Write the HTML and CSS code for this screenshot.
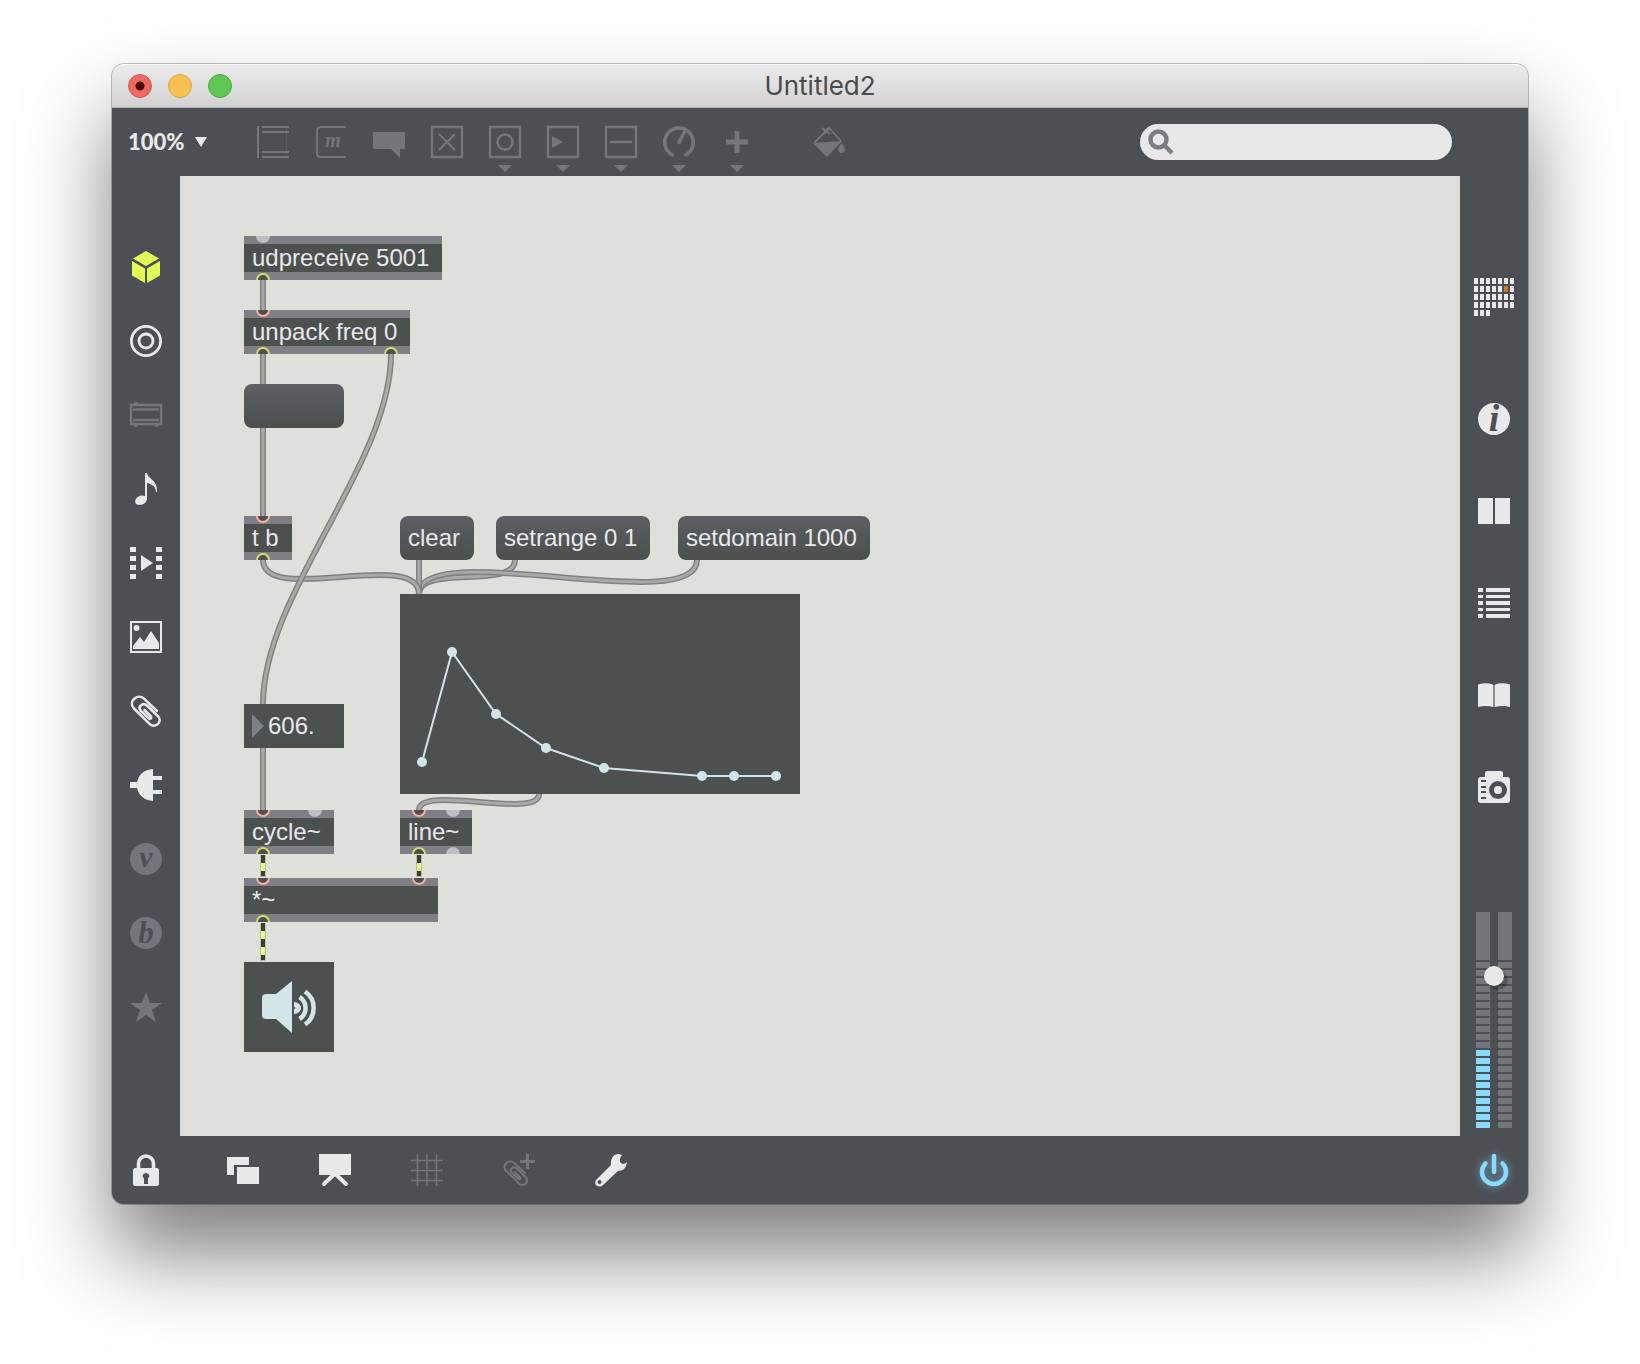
FILE: index.html
```html
<!DOCTYPE html>
<html lang="en">
<head>
<meta charset="utf-8">
<title>Untitled2</title>
<link rel="stylesheet" href="styles.css">
</head>
<body>
<svg class="defs" aria-hidden="true">
  <symbol id="clip" viewBox="0 0 32 32">
    <path fill="none" stroke="currentColor" stroke-width="2.500" stroke-linecap="round" stroke-linejoin="round" d="M27 16L14 3.600C7.500-2-2 6.500 3.500 13L19.500 28.800C25 34 33 27 28.300 21.500L17 10.500C13 7 7.500 11.500 10.500 15.500L19 23.500C20.500 24.500 22 23 21 21.500L14.500 15"/>
  </symbol>
  <symbol id="down" viewBox="0 0 14 7"><path fill="currentColor" d="M0 0h14L7 7z"/></symbol>
</svg>

<main class="window">
  <header class="titlebar">
    <div class="lights">
      <button class="light close" aria-label="Close"></button>
      <button class="light minimize" aria-label="Minimize"></button>
      <button class="light expand" aria-label="Zoom window"></button>
    </div>
    <h1 class="title">Untitled2</h1>
  </header>

  <div class="toolbar">
    <div class="zoom">
      <select class="zoom-select" aria-label="Zoom level"><option>100%</option></select>
      <svg class="zoom-arrow" viewBox="0 0 12 10"><path fill="currentColor" d="M0 0h12L6 10z"/></svg>
    </div>
    <div class="tools">
      <button class="icon-button" aria-label="Object"><svg class="icon" viewBox="0 0 32 32"><path fill="currentColor" d="M0 0h2v32H0zM5 0h27v2H5zM5 5h27v2H5zM5 25h27v2H5zM5 30h27v2H5z"/><path stroke="currentColor" opacity=".3" d="M29.500 2v28"/></svg></button>
      <button class="icon-button" aria-label="Message"><svg class="icon" viewBox="0 0 32 32"><path fill="none" stroke="currentColor" stroke-width="2" d="M31 1H6Q2 1 2 5v22q0 4 4 4h25"/><text class="glyph" x="18" y="21" font-size="20">m</text></svg></button>
      <button class="icon-button" aria-label="Comment"><svg class="icon" viewBox="0 0 32 32"><path fill="currentColor" d="M0 6h32v17h-5v9l-9-9H0z"/></svg></button>
      <button class="icon-button" aria-label="Toggle"><svg class="icon" viewBox="0 0 32 32"><path fill="none" stroke="currentColor" stroke-width="2.400" d="M1 1h30v30H1zM8 8l16 16M24 8L8 24"/></svg></button>
      <button class="icon-button" aria-label="Button"><svg class="icon" viewBox="0 0 32 32"><path fill="none" stroke="currentColor" stroke-width="2.400" d="M1 1h30v30H1z"/><circle cx="16" cy="16" r="7.500" fill="none" stroke="currentColor" stroke-width="2.400"/></svg><svg class="more"><use href="#down"/></svg></button>
      <button class="icon-button" aria-label="Number"><svg class="icon" viewBox="0 0 32 32"><path fill="none" stroke="currentColor" stroke-width="2.400" d="M1 1h30v30H1z"/><path fill="currentColor" d="M5 10l11 6-11 6z"/></svg><svg class="more"><use href="#down"/></svg></button>
      <button class="icon-button" aria-label="Slider"><svg class="icon" viewBox="0 0 32 32"><path fill="none" stroke="currentColor" stroke-width="2.400" d="M1 1h30v30H1zM5 16h22"/></svg><svg class="more"><use href="#down"/></svg></button>
      <button class="icon-button" aria-label="Dial"><svg class="icon" viewBox="0 0 32 32"><path fill="none" stroke="currentColor" stroke-width="3.600" stroke-linecap="round" d="M9.500 29A14.300 14.300 0 1 1 22.500 29M16 16.500L22 5"/></svg><svg class="more"><use href="#down"/></svg></button>
      <button class="icon-button" aria-label="Add"><svg class="icon" viewBox="0 0 32 32"><path fill="currentColor" d="M13.500 5h5v8.500H27v5h-8.500V27h-5v-8.500H5v-5h8.500z"/></svg><svg class="more"><use href="#down"/></svg></button>
      <button class="icon-button paint" aria-label="Format"><svg class="icon" viewBox="0 0 32 32"><path fill="none" stroke="currentColor" stroke-width="1.800" d="M1 17L16 2l12 13M9 2l8 6M15 2L11 8"/><path fill="currentColor" d="M0 17l29-2L14 31zM28.500 17q4.500 6 3 8.500q-3 3-6 0q-1.500-3 3-8.500"/></svg></button>
    </div>
    <label class="search">
      <svg class="search-icon" viewBox="0 0 26 26"><circle cx="10.500" cy="10.500" r="8" fill="none" stroke="currentColor" stroke-width="4.500"/><path stroke="currentColor" stroke-width="4.500" d="M16 16l8 8"/></svg>
      <input class="search-input" type="search" aria-label="Search">
    </label>
  </div>

  <div class="workspace">
    <nav class="rail left" aria-label="Object palette">
      <button class="icon-button active" aria-label="Objects"><svg class="icon" viewBox="0 0 32 32"><path fill="currentColor" d="M16 0l13 7.500-13 7.500L3 7.500zM2 10l13 7.500V32L2 24.500zM30 10v14.500L17 32V17.500z"/></svg></button>
      <button class="icon-button" aria-label="Controls"><svg class="icon" viewBox="0 0 32 32"><g fill="none" stroke="currentColor" stroke-width="2.800"><circle cx="16" cy="16" r="14.600"/><circle cx="16" cy="16" r="7"/></g></svg></button>
      <button class="icon-button dim" aria-label="Devices"><svg class="icon" viewBox="0 0 32 32"><path fill="none" stroke="currentColor" stroke-width="2.400" d="M1 6h30v19H1zM3 10.500h26M3 21h26"/><path fill="currentColor" d="M3 5q3-4 6 0zM3 26h5q-2 4-5 0zM24 26h5q-3 4-5 0z"/></svg></button>
      <button class="icon-button" aria-label="Audio"><svg class="icon" viewBox="0 0 32 32"><path fill="currentColor" d="M15 0h2c0 5 11 7 10 19h-1c0-5-4-8-9-9v15c0 6-6 8-10 6.500c-4-2-1-9 5-9q2 0 3 .5z"/></svg></button>
      <button class="icon-button" aria-label="Video"><svg class="icon" viewBox="0 0 32 32"><path fill="currentColor" d="M0 0h6v5H0zM0 9h6v5H0zM0 18h6v5H0zM0 27h6v5H0zM26 0h6v5h-6zM26 9h6v5h-6zM26 18h6v5h-6zM26 27h6v5h-6zM11 8l12 8-12 8z"/></svg></button>
      <button class="icon-button" aria-label="Images"><svg class="icon" viewBox="0 0 32 32"><path fill="none" stroke="currentColor" stroke-width="2" d="M1 1h30v30H1z"/><circle cx="6.500" cy="7" r="3" fill="currentColor"/><path fill="currentColor" d="M3 28v-3l7-9 4 5 7-11 8 12v6z"/></svg></button>
      <button class="icon-button" aria-label="Clippings"><svg class="icon"><use href="#clip"/></svg></button>
      <button class="icon-button" aria-label="Plug-ins"><svg class="icon" viewBox="0 0 32 32"><path fill="currentColor" d="M23 0v7h9v4h-9v10h9v4h-9v7Q10 31 7 19H0v-6h7Q10 1 23 0z"/></svg></button>
      <button class="icon-button dim" aria-label="Vizzie"><svg class="icon" viewBox="0 0 32 32"><circle cx="16" cy="16" r="16" fill="currentColor"/><text class="glyph cut" x="16" y="24" font-size="30">v</text></svg></button>
      <button class="icon-button dim" aria-label="Beap"><svg class="icon" viewBox="0 0 32 32"><circle cx="16" cy="16" r="16" fill="currentColor"/><text class="glyph cut" x="16" y="26" font-size="31">b</text></svg></button>
      <button class="icon-button dim" aria-label="Favorites"><svg class="icon" viewBox="0 0 32 32"><path fill="currentColor" d="M16 1l4 11h12l-10 7 4 12-10-7-10 7 4-12-10-7h12z"/></svg></button>
    </nav>

    <section class="canvas" aria-label="Patcher">
      <svg class="cords" aria-hidden="true">
        <defs>
          <path id="c1" d="M83 104V134"/><path id="c2" d="M83 178V340"/>
          <path id="c3" d="M211 178C211 288 83 418 83 528"/>
          <path id="c4" d="M335 384C335 414 239 388 239 418"/>
          <path id="c5" d="M517 384C517 442 239 360 239 418"/>
          <path id="c6" d="M239 384V418"/>
          <path id="c7" d="M83 384C83 430 239 372 239 418"/>
          <path id="c8" d="M83 572V634"/><path id="c9" d="M359 618C359 644 239 608 239 634"/>
        </defs>
        <use class="edge" href="#c1"/><use class="core" href="#c1"/>
        <use class="edge" href="#c2"/><use class="core" href="#c2"/>
        <use class="edge" href="#c4"/><use class="core" href="#c4"/>
        <use class="edge" href="#c5"/><use class="core" href="#c5"/>
        <use class="edge" href="#c6"/><use class="core" href="#c6"/>
        <use class="edge" href="#c7"/><use class="core" href="#c7"/>
        <use class="edge" href="#c3"/><use class="core" href="#c3"/>
        <use class="edge" href="#c8"/><use class="core" href="#c8"/>
        <use class="edge" href="#c9"/><use class="core" href="#c9"/>
        <path class="signal-edge" d="M83 679V701M239 679V701M83 747V785"/>
        <path class="signal-core" d="M83 679V700M239 679V700M83 747V784"/>
        <path class="signal-dash" d="M83 687v8M239 687v8M83 755v8M83 771v8"/>
      </svg>

      <div class="node object udpreceive">udpreceive 5001<i class="port in spare p1"></i><i class="port out p1"></i></div>
      <div class="node object unpack">unpack freq 0<i class="port in p1"></i><i class="port out p1"></i><i class="port out p147"></i></div>
      <button class="node message blank" aria-label="Empty message"></button>
      <div class="node object trigger">t b<i class="port in p1"></i><i class="port out p1"></i></div>
      <button class="node message clear">clear</button>
      <button class="node message setrange">setrange 0 1</button>
      <button class="node message setdomain">setdomain 1000</button>
      <svg class="node function" viewBox="0 0 400 200" role="img" aria-label="Breakpoint function">
        <path fill="none" stroke="currentColor" stroke-width="2" d="M22 168L52 58L96 120L146 154L204 174L302 182H376"/>
        <g fill="currentColor"><circle cx="22" cy="168" r="5"/><circle cx="52" cy="58" r="5"/><circle cx="96" cy="120" r="5"/><circle cx="146" cy="154" r="5"/><circle cx="204" cy="174" r="5"/><circle cx="302" cy="182" r="5"/><circle cx="334" cy="182" r="5"/><circle cx="376" cy="182" r="5"/></g>
      </svg>
      <label class="node number"><svg class="number-arrow" viewBox="0 0 12 24"><path fill="currentColor" d="M0 0l12 12L0 24z"/></svg><input class="number-input" value="606." aria-label="Frequency"></label>
      <div class="node object cycle">cycle~<i class="port in p1"></i><i class="port in spare p71"></i><i class="port out p1"></i></div>
      <div class="node object line">line~<i class="port in p1"></i><i class="port in spare p53"></i><i class="port out p1"></i><i class="port out spare p53"></i></div>
      <div class="node object times">*~<i class="port in p1"></i><i class="port in p175"></i><i class="port out p1"></i></div>
      <button class="node dac" aria-label="Audio output"><svg class="speaker" viewBox="0 0 90 90"><path fill="currentColor" d="M18 36q0-4 4-4h10l16-13v52L32 57H22q-4 0-4-4z"/><g fill="none" stroke="currentColor" stroke-width="4.500"><path d="M61 29.500a20 20 0 0 1 0 33M55.500 35a13 13 0 0 1 0 22"/></g><path fill="currentColor" d="M50 40q7 1 7 6t-7 6v-5l2-1-2-1z"/></svg></button>
    </section>

    <aside class="rail right" aria-label="Inspectors">
      <button class="icon-button calendar" aria-label="Console"><svg class="calendar-icon" viewBox="0 0 40 38"><defs><pattern id="cells" width="6" height="8" patternUnits="userSpaceOnUse"><path fill="#e9e9e9" d="M0 0h4v6H0z"/></pattern></defs><path fill="url(#cells)" d="M0 0h40v32H16v6H0z"/><path fill="#d0772f" d="M30 8h4v6h-4z"/></svg></button>
      <button class="icon-button" aria-label="Inspector"><svg class="icon" viewBox="0 0 32 32"><circle cx="16" cy="16" r="16" fill="currentColor"/><text class="glyph info" x="16" y="28" font-size="38">i</text></svg></button>
      <button class="icon-button" aria-label="Split view"><svg class="icon" viewBox="0 0 32 32"><path fill="currentColor" d="M0 3h15v26H0zM17 3h15v26H17z"/></svg></button>
      <button class="icon-button" aria-label="List"><svg class="icon" viewBox="0 0 32 32"><path fill="currentColor" d="M0 1h5v4H0zM8 1h24v4H8zM0 8h5v3H0zM8 8h24v3H8zM0 14h5v4H0zM8 14h24v4H8zM0 21h5v3H0zM8 21h24v3H8zM0 27h5v4H0zM8 27h24v4H8z"/></svg></button>
      <button class="icon-button" aria-label="Reference"><svg class="icon" viewBox="0 0 32 32"><path fill="currentColor" d="M0 5.500q8-2.500 15 0V28q-7-2-15 0zM17 5.500q7-2.500 15 0V28q-8-2-15 0z"/><path fill="currentColor" opacity=".4" d="M15 6h2v22h-2z"/></svg></button>
      <button class="icon-button" aria-label="Snapshots"><svg class="icon" viewBox="0 0 32 32"><path fill="currentColor" d="M9 0h14q2 0 2 2v4h4q3 0 3 3v20q0 3-3 3H3q-3 0-3-3V9q0-3 3-3h4V2q0-2 2-2z"/><path class="cut" d="M3 9h5v2H3zM3 15h5v2H3zM3 20h5v2H3zM3 26h5v2H3z"/><circle class="cut" cx="20" cy="19" r="9"/><circle cx="20" cy="19" r="4" fill="currentColor"/></svg></button>
      <div class="meter">
        <div class="bar"><div class="cap"></div><div class="segments"></div><div class="segments lit"></div></div>
        <div class="bar"><div class="cap"></div><div class="segments"></div></div>
        <input class="fader" type="range" min="0" max="196" value="142" aria-label="Output level">
      </div>
    </aside>
  </div>

  <footer class="bottombar">
    <button class="icon-button lock" aria-label="Lock patcher"><svg class="icon" viewBox="0 0 32 32"><path fill="none" stroke="currentColor" stroke-width="3.600" d="M8.500 16V9.500a7.500 7.500 0 0 1 15 0V16"/><rect x="3" y="14" width="26" height="18" rx="2.500" fill="currentColor"/><path class="cut" d="M14 24q-2-1-1-3.500q3-3 6 0q1 2.500-1 3.500v6h-4z"/></svg></button>
    <button class="icon-button" aria-label="Windows"><svg class="icon" viewBox="0 0 32 32"><path fill="currentColor" d="M0 3h22v8H7v10H0zM10 13h22v17H10z"/></svg></button>
    <button class="icon-button" aria-label="Presentation mode"><svg class="icon" viewBox="0 0 32 32"><path fill="currentColor" d="M0 0h32v21H0z"/><path fill="none" stroke="currentColor" stroke-width="4" stroke-linecap="round" d="M5 30L16 19.500l11 10.500"/></svg></button>
    <button class="icon-button dim" aria-label="Grid"><svg class="icon" viewBox="0 0 32 32"><path stroke="currentColor" stroke-width="1.500" d="M0 6.500h32M0 16.500h32M0 26.500h32M6.500 0v32M16 0v32M25.500 0v32"/></svg></button>
    <button class="icon-button dim" aria-label="Add clipping"><svg class="icon" viewBox="0 0 32 32"><use href="#clip" y="5" width="26" height="28"/><path fill="currentColor" d="M23 0h3v6h6v3h-6v6h-3V9h-6V6h6z"/></svg></button>
    <button class="icon-button" aria-label="Tools"><svg class="icon" viewBox="0 0 32 32"><path fill="currentColor" fill-rule="evenodd" d="M27 1q-3 4-2 7 3 4 7 0-1 9-9 9L8 31q-3 3-7 0-2-3 1-6L16 11q-1-10 7-11 2 0 4 1zM4.500 26a2 2 0 1 0 .1 0z"/></svg></button>
    <button class="icon-button power" aria-label="Audio on"><svg class="icon" viewBox="0 0 32 32"><path fill="none" stroke="currentColor" stroke-width="4.500" stroke-linecap="round" d="M7.500 9.500A12 12 0 1 0 24.500 9.500M16 2V18"/></svg></button>
  </footer>
</main>
</body>
</html>
```
FILE: styles.css
```css
* { box-sizing: border-box; }
body {
  margin: 0;
  min-height: 100vh;
  padding: 64px 112px 160px;
  display: flex;
  background: #fff;
  font-family: "Liberation Sans", Arial, sans-serif;
  font-size: 24px;
}
button, input, select { font: inherit; color: inherit; border: 0; padding: 0; background: none; outline: 0; }
svg { display: block; overflow: visible; }
.defs { position: absolute; width: 0; height: 0; }

.window {
  flex: 1;
  min-width: 0;
  display: flex;
  flex-direction: column;
  border-radius: 12px;
  background: #4c4f54;
  color: #e9e9e9;
  box-shadow: 0 0 0 1px rgba(0, 0, 0, .24), 0 50px 84px rgba(0, 0, 0, .5);
}
.titlebar {
  display: grid;
  grid-template-columns: 1fr auto 1fr;
  align-items: center;
  height: 44px;
  padding: 0 16px;
  border-radius: 12px 12px 0 0;
  border-bottom: 1px solid #b0b0b0;
  background: linear-gradient(#ececec, #d2d2d2);
  box-shadow: inset 0 1px #f8f8f8;
}
.lights { display: flex; gap: 16px; }
.light { width: 24px; height: 24px; border-radius: 50%; border: 1px solid; }
.close { background: radial-gradient(circle, #490503 4px, #ee6a60 5px); border-color: #d9544b; }
.minimize { background: #f6c150; border-color: #dba541; }
.expand { background: #60c655; border-color: #4aa73c; }
.title { margin: 0; font: 400 26px/40px Inter, sans-serif; color: #4a4a4a; }

.toolbar { display: flex; align-items: center; height: 68px; padding: 0 76px 0 16px; }
.zoom { display: flex; align-items: center; width: 129px; gap: 10px; }
.zoom-select { appearance: none; font: 900 22px/32px Lato, sans-serif; }
.zoom-arrow { width: 12px; height: 10px; }
.tools { display: flex; gap: 26px; color: #73767b; }
.paint { margin-left: 34px; }
.icon-button { position: relative; flex: none; width: 32px; height: 32px; }
.icon { width: 32px; height: 32px; }
.more { position: absolute; left: 9px; top: 39px; width: 14px; height: 7px; }
.glyph { font-family: "Liberation Serif", serif; font-weight: 700; font-style: italic; text-anchor: middle; fill: currentColor; }
.cut, .glyph.cut, .info { fill: #4c4f54; }
.search {
  display: flex;
  align-items: center;
  width: 312px;
  height: 36px;
  margin-left: auto;
  padding: 0 8px;
  gap: 8px;
  border-radius: 18px;
  background: #e8e8e8;
  color: #7c7e86;
}
.search-icon { width: 26px; height: 26px; }
.search-input { flex: 1; min-width: 0; height: 32px; color: #4c4f54; }

.workspace { flex: 1; display: flex; min-height: 960px; }
.rail { flex: none; width: 68px; display: flex; flex-direction: column; align-items: center; }
.left { padding-top: 75px; gap: 42px; }
.right { padding: 102px 0 8px; gap: 60px; }
.active { color: #e2fb55; }
.dim { color: #73767b; }
.calendar { width: 40px; height: 38px; margin-bottom: 27px; }
.calendar-icon { width: 40px; height: 38px; }
.meter { position: relative; display: flex; gap: 8px; height: 216px; margin-top: auto; }
.bar { display: flex; flex-direction: column; gap: 2px; width: 14px; }
.cap { height: 48px; background: #73767b; }
.segments { flex: 1; background: repeating-linear-gradient(#73767b 0 6px, transparent 6px 8px); }
.lit { flex: none; height: 78px; background: repeating-linear-gradient(#87dbff 0 6px, transparent 6px 8px); }
.fader {
  position: absolute;
  left: 8px;
  top: 0;
  width: 20px;
  height: 216px;
  margin: 0;
  appearance: none;
  writing-mode: vertical-lr;
  direction: rtl;
}
.fader::-webkit-slider-thumb {
  appearance: none;
  width: 20px;
  height: 20px;
  border-radius: 50%;
  background: #e9e9e9;
  box-shadow: 4px 4px 1px rgba(0, 0, 0, .25);
}

.canvas { position: relative; flex: 1; min-width: 0; background: #dfe0da; color: #e9e9ed; }
.cords { position: absolute; inset: 0; width: 100%; height: 100%; fill: none; }
.edge { stroke: #818181; stroke-width: 6px; }
.core { stroke: #a9a9a9; stroke-width: 3px; }
.signal-edge { stroke: #bcbeb2; stroke-width: 6px; }
.signal-core { stroke: #3d412b; stroke-width: 4px; }
.signal-dash { stroke: #e0ff87; stroke-width: 4px; }

.node { position: absolute; height: 44px; background: #4c504e; white-space: nowrap; }
.object { padding: 0 8px; line-height: 28px; border: solid #7f7f85; border-width: 8px 0; }
.message { padding: 0 8px; line-height: 44px; text-align: left; border-radius: 8px; background: linear-gradient(#606166, #54585a 40%, #4c504e 90%); }
.udpreceive { left: 64px; top: 60px; width: 198px; }
.unpack { left: 64px; top: 134px; width: 166px; }
.blank { left: 64px; top: 208px; width: 100px; }
.trigger { left: 64px; top: 340px; width: 48px; }
.clear { left: 220px; top: 340px; width: 74px; }
.setrange { left: 316px; top: 340px; width: 154px; }
.setdomain { left: 498px; top: 340px; width: 192px; }
.function { left: 220px; top: 418px; width: 400px; height: 200px; color: #d2e6ea; }
.number { left: 64px; top: 528px; width: 100px; display: flex; align-items: center; gap: 4px; padding: 0 8px; }
.number-arrow { flex: none; width: 12px; height: 24px; color: #7f7f85; }
.number-input { flex: 1; min-width: 0; height: 40px; }
.cycle { left: 64px; top: 634px; width: 90px; }
.line { left: 220px; top: 634px; width: 72px; }
.times { left: 64px; top: 702px; width: 194px; }
.dac { left: 64px; top: 786px; width: 90px; height: 90px; color: #d2e6ea; }
.speaker { width: 90px; height: 90px; }

.port { position: absolute; width: 14px; height: 7px; background: #4c504e; }
.in { top: -8px; border: 2px solid #f5b0a2; border-top: 0; border-radius: 0 0 7px 7px; }
.out { bottom: -8px; border: 2px solid #d5dc6c; border-bottom: 0; border-radius: 7px 7px 0 0; }
.spare { background: #bebfc2; border: 0; }
.p1 { left: 12px; }
.p53 { left: 46px; }
.p71 { left: 64px; }
.p147 { left: 140px; }
.p175 { left: 168px; }

.bottombar { display: flex; align-items: center; gap: 60px; height: 68px; padding: 0 18px; }
.lock { margin-right: 5px; }
.power { margin-left: auto; color: #87dbff; filter: drop-shadow(0 0 4px rgba(135, 219, 255, .6)); }
```
